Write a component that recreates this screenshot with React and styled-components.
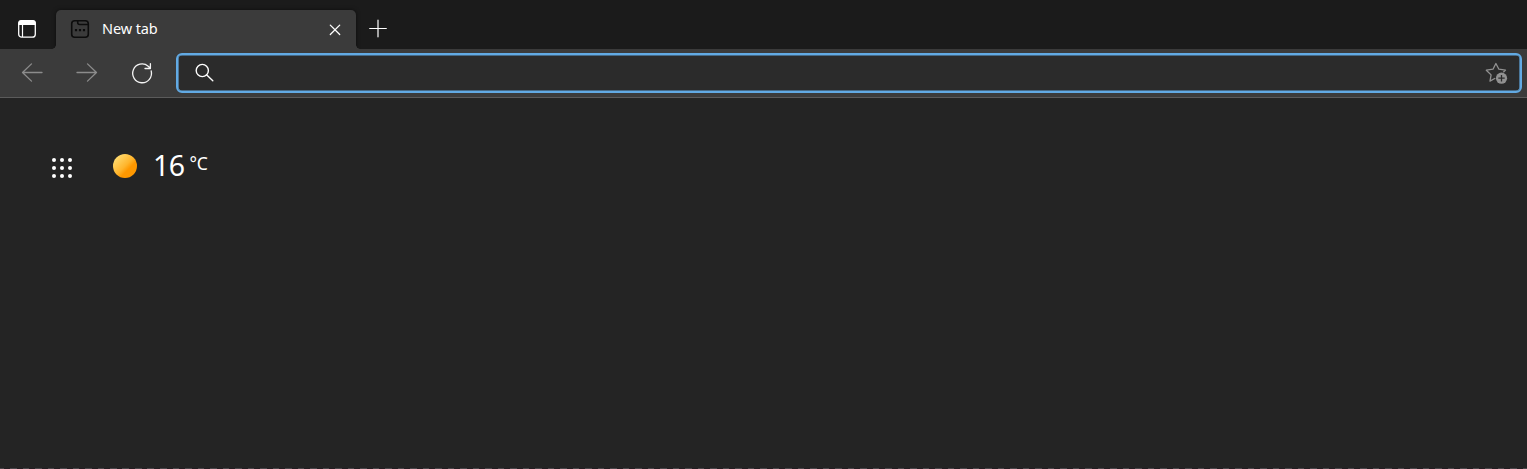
import React from "react";
import styled, { createGlobalStyle } from "styled-components";

const GlobalStyle = createGlobalStyle`
  * { box-sizing: border-box; }
  body { margin: 0; background: #242424; font-family: "Noto Sans", "Open Sans", sans-serif; color: #fff; overflow: hidden; }
  svg { display: block; flex: none; }
`;

const Browser = styled.div`
  display: flex;
  flex-direction: column;
  width: 100%;
  height: 100vh;
`;

const TabStrip = styled.header`
  display: flex;
  align-items: flex-end;
  height: 49px;
  background: #1b1b1b;
`;

const StripButton = styled.button`
  display: flex;
  align-items: center;
  justify-content: center;
  width: ${(p) => p.$width}px;
  height: 39px;
  padding: 0 ${(p) => p.$nudge || 0}px 1px 0;
  border: 0;
  background: none;
  color: #fff;
`;

const Tab = styled.div`
  position: relative;
  display: flex;
  align-items: center;
  width: 300px;
  height: 39px;
  padding: 0 12px 1px 14px;
  border-radius: 5px 5px 0 0;
  background: #3b3b3b;
  box-shadow: 0 0 4px rgba(0, 0, 0, 0.55);
  clip-path: inset(-6px -6px 0 -6px);
  &::before, &::after {
    content: "";
    position: absolute;
    bottom: 0;
    width: 4px;
    height: 4px;
  }
  &::before { left: -4px; background: radial-gradient(circle at 0 0, transparent 3.5px, #3b3b3b 4px); }
  &::after { right: -4px; background: radial-gradient(circle at 100% 0, transparent 3.5px, #3b3b3b 4px); }
`;

const TabTitle = styled.span`
  flex: 1;
  margin-left: 12px;
  font-size: 14.5px;
  line-height: 20px;
  letter-spacing: -0.1px;
  padding-bottom: 2px;
`;

const Toolbar = styled.nav`
  display: flex;
  align-items: center;
  height: 49px;
  padding: 0 5px 1px 4px;
  background: #3b3b3b;
  border-bottom: 1px solid #5b5b5b;
`;

const NavButton = styled.button`
  display: flex;
  align-items: center;
  justify-content: center;
  width: 55px;
  height: 40px;
  padding: 0;
  border: 0;
  background: none;
  color: ${(p) => (p.$disabled ? "#8c8c8c" : "#f4f4f4")};
`;

const AddressBar = styled.div`
  display: flex;
  flex: 1;
  align-items: center;
  justify-content: space-between;
  height: 40px;
  margin-left: 7px;
  padding: 0 11px 0 16px;
  border: 2px solid #62aae4;
  border-radius: 6px;
  background: #2b2b2b;
  box-shadow: inset 0 0 0 0.6px #62aae4;
`;

const Page = styled.main`
  display: flex;
  flex: 1;
  align-items: flex-start;
  padding: 50px 0 0 51px;
  background: #242424;
`;

const AppGrid = styled.div`
  display: grid;
  grid-template-columns: repeat(3, 4px);
  gap: 4px;
  margin: 10px 40px 0 1px;
`;

const Dot = styled.i`
  height: 4px;
  border-radius: 50%;
  background: #fff;
`;

const Weather = styled.div`
  display: flex;
  align-items: flex-start;
`;

const Sun = styled.span`
  width: 24px;
  height: 24px;
  margin: 6px 0 0 1px;
  border-radius: 50%;
  background: linear-gradient(135deg, #ffe078 8%, #ffb52c 50%, #ff9800 64%);
`;

const Degrees = styled.span`
  margin-left: 16px;
  font-size: 28.5px;
  line-height: 35px;
  letter-spacing: -0.5px;
`;

const Unit = styled.span`
  margin-left: 5px;
  font-size: 17.5px;
  line-height: 31px;
  letter-spacing: -0.3px;
`;

const DashLine = styled.footer`
  height: 1px;
  background: repeating-linear-gradient(90deg, #4b474b 0 4px, #251d22 4px 10px, #4b474b 10px 12.5px);
`;

const Stroke = ({ size = 24, width = 1.2, children }) => (
  <svg width={size} height={size} viewBox={`0 0 ${size} ${size}`} fill="none" stroke="currentColor" strokeWidth={width} strokeLinecap="round" strokeLinejoin="round">
    {children}
  </svg>
);

export default function App() {
  return (
    <>
      <GlobalStyle />
      <Browser>
        <TabStrip>
          <StripButton $width={56} $nudge={2} aria-label="Tab actions">
            <svg width="20" height="20" viewBox="0 0 20 20" fill="none">
              <rect x="1.7" y="1.8" width="16.6" height="16.4" rx="3" stroke="#fff" strokeWidth="1.3" />
              <path d="M1.2 6.1V4.1a3 3 0 0 1 3-3h11.600a3 3 0 0 1 3 3v2z" fill="#fff" />
              <path d="M5.5 6V18" stroke="#fff" strokeWidth="1.2" />
            </svg>
          </StripButton>
          <Tab>
            <svg width="20" height="20" viewBox="0 0 20 20" fill="none" stroke="#0c0c0c" strokeWidth="1.6">
              <rect x="1.7" y="1.7" width="16.6" height="16.6" rx="3" />
              <path d="M7.7 1.9v1.6a2 2 0 0 0 2 2h8.6" />
              <path d="M4.9 11.2h2.2M8.9 11.2h2.2M12.9 11.2h2.2" strokeWidth="2.2" />
            </svg>
            <TabTitle>New tab</TabTitle>
            <Stroke size={18} width={1.3}><path d="M4.3 5.1l9.4 9.4M13.7 5.1l-9.4 9.4" /></Stroke>
          </Tab>
          <StripButton $width={43} aria-label="New tab">
            <Stroke size={20} width={1.2}><path d="M10 1.2v16.6M1.7 9.5h16.6" /></Stroke>
          </StripButton>
        </TabStrip>
        <Toolbar>
          <NavButton $disabled aria-label="Back">
            <Stroke width={1.3}><path d="M22 11.5H2.5M11.5 2.9L2.5 11.5l9 8.600" /></Stroke>
          </NavButton>
          <NavButton $disabled aria-label="Forward">
            <Stroke width={1.3}><path d="M2 11.5h19.5M12.5 2.9l9 8.600-9 8.600" /></Stroke>
          </NavButton>
          <NavButton aria-label="Refresh">
            <Stroke width={1.3}><path d="M21.2 10a9.4 9.4 0 1 1-3-4.8L20.4 7.2M20.4 2.7V7.5H15" /></Stroke>
          </NavButton>
          <AddressBar>
            <Stroke width={1.4}><circle cx="8.3" cy="9.5" r="6.1" /><path d="M12.8 14l6 5.800" /></Stroke>
            <svg width="24" height="24" viewBox="0 0 24 24" fill="none">
              <path d="M10.2 17.3L5 20.1l1.1-6.2L1.3 9.2l6.7-1L10.900 2.500l3 5.700 6.600.9-2.200 2.200" stroke="#919191" strokeWidth="1.3" strokeLinejoin="round" />
              <circle cx="16.5" cy="17.2" r="5.6" fill="#919191" />
              <path d="M16.5 14v6.4M13.3 17.2h6.4" stroke="#2b2b2b" strokeWidth="1.3" />
            </svg>
          </AddressBar>
        </Toolbar>
        <Page>
          <AppGrid>{Array.from({ length: 9 }, (_, i) => <Dot key={i} />)}</AppGrid>
          <Weather>
            <Sun />
            <Degrees>16</Degrees>
            <Unit>°C</Unit>
          </Weather>
        </Page>
        <DashLine />
      </Browser>
    </>
  );
}
